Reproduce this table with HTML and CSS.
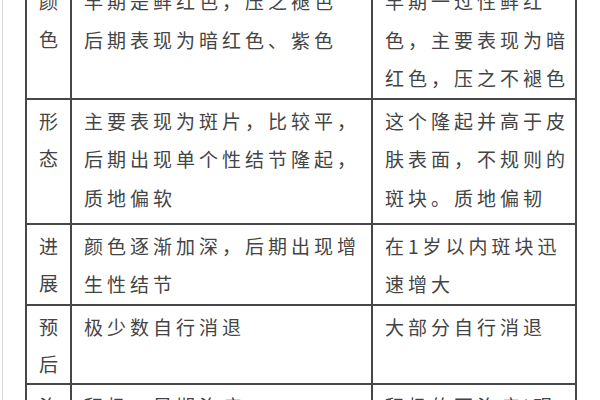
FILE: index.html
```html
<!DOCTYPE html>
<html lang="zh-CN">
<head>
<meta charset="utf-8">
<link rel="stylesheet" href="styles.css">
</head>
<body>
<div class="page">
  <table class="cmp">
    <colgroup>
      <col class="c1"><col class="c2"><col class="c3">
    </colgroup>
    <tr class="r1">
      <td class="key">颜<br>色</td>
      <td>早期是鲜红色，压之褪色<br>后期表现为暗红色、紫色</td>
      <td>早期一过性鲜红<br>色，主要表现为暗<br>红色，压之不褪色</td>
    </tr>
    <tr class="r2">
      <td class="key">形<br>态</td>
      <td>主要表现为斑片，比较平，<br>后期出现单个性结节隆起，<br>质地偏软</td>
      <td>这个隆起并高于皮<br>肤表面，不规则的<br>斑块。质地偏韧</td>
    </tr>
    <tr class="r3">
      <td class="key">进<br>展</td>
      <td>颜色逐渐加深，后期出现增<br>生性结节</td>
      <td>在1岁以内斑块迅<br>速增大</td>
    </tr>
    <tr class="r4">
      <td class="key">预<br>后</td>
      <td>极少数自行消退</td>
      <td>大部分自行消退</td>
    </tr>
    <tr class="r5">
      <td class="key">治<br>疗</td>
      <td>积极、早期治疗</td>
      <td>积极的不治疗!观<br>察</td>
    </tr>
  </table>
</div>
</body>
</html>
```

FILE: styles.css
```css
html, body {
  margin: 0;
  padding: 0;
  background: #ffffff;
  overflow: hidden;
}
body {
  width: 600px;
  height: 400px;
}
.page {
  margin-left: 2px;
  border-left: 1px solid #d6d6d6;
  padding-left: 22px;
  height: 460px;
}
.cmp {
  border-collapse: collapse;
  table-layout: fixed;
  width: 550px;
  margin-top: -22px;
  font-family: "Noto Sans CJK SC", "Noto Sans", sans-serif;
  font-size: 19px;
  letter-spacing: 4px;
  color: #444444;
}
.c1 { width: 45px; }
.c2 { width: 301px; }
.c3 { width: 204px; }
.cmp td {
  border: 2px solid #474747;
  vertical-align: top;
  padding: 2px 0 0 12px;
  line-height: 38.5px;
  white-space: nowrap;
  overflow: hidden;
}
.cmp td.key {
  padding-left: 4px;
  text-align: center;
  line-height: 37.5px;
}
.r1 { height: 112px; }
.r2 { height: 125px; }
.r3 { height: 81px; }
.r4 { height: 75px; }
.r5 { height: 90px; }
```
